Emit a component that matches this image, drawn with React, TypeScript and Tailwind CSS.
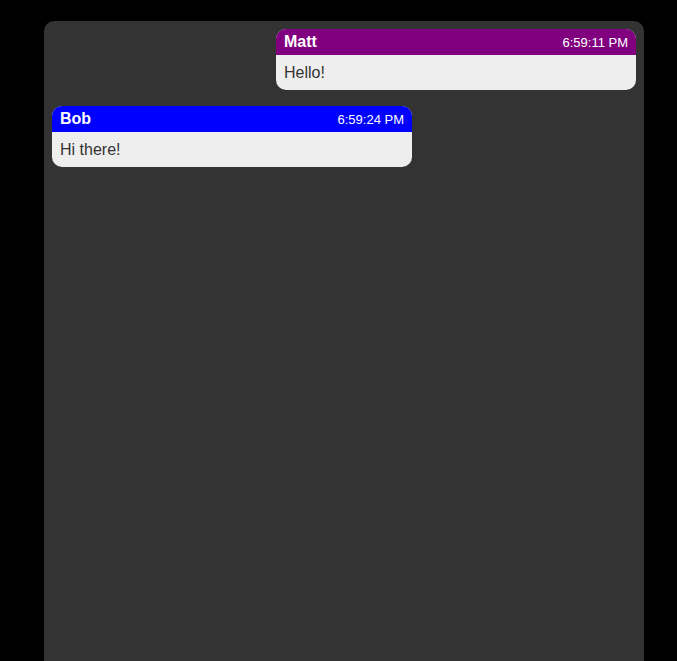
import React from 'react';

type Message = {
  user: string;
  time: string;
  text: string;
  color: string;
  mine: boolean;
};

const messages: Message[] = [
  { user: 'Matt', time: '6:59:11 PM', text: 'Hello!', color: 'bg-[#800080]', mine: true },
  { user: 'Bob', time: '6:59:24 PM', text: 'Hi there!', color: 'bg-[#0000ff]', mine: false },
];

const App = () => {
  return (
    <div className="h-screen overflow-hidden bg-black pt-[21px] font-['Liberation_Sans',Arial,sans-serif]">
      <div className="ml-[44px] w-[600px] h-[700px] rounded-t-[10px] bg-[#333333] p-2 flex flex-col gap-4">
        {messages.map((m, i) => (
          <div
            key={i}
            className={`w-[360px] rounded-[10px] overflow-hidden bg-[#eeeeee] ${m.mine ? 'self-end' : 'self-start'}`}
          >
            <div className={`${m.color} flex items-center justify-between px-2 h-[26px] text-white`}>
              <span className="font-bold text-[16px] leading-[18px]">{m.user}</span>
              <span className="text-[13px] leading-[15px] pt-[1px]">{m.time}</span>
            </div>
            <div className="px-2 h-[35px] flex items-center text-[16px] text-[#333333]">{m.text}</div>
          </div>
        ))}
      </div>
    </div>
  );
};

export default App;
